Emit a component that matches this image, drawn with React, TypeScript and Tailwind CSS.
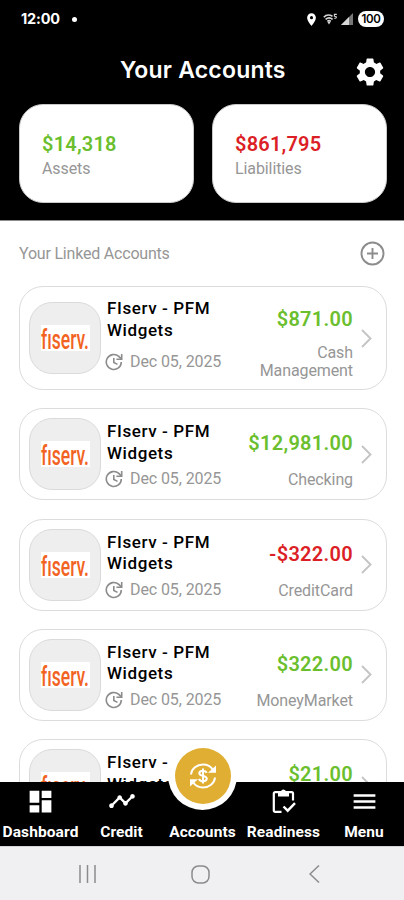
import type { ReactNode } from "react"
import { MdSettings, MdDashboard, MdTimeline, MdMenu, MdLocationOn } from "react-icons/md"

type Account = {
  name: string;
  date: string;
  amount: string;
  type: string;
}

const accounts: Account[] = [
  { name: "FIserv - PFM Widgets", date: "Dec 05, 2025", amount: "$871.00", type: "Cash Management" },
  { name: "FIserv - PFM Widgets", date: "Dec 05, 2025", amount: "$12,981.00", type: "Checking" },
  { name: "FIserv - PFM Widgets", date: "Dec 05, 2025", amount: "-$322.00", type: "CreditCard" },
  { name: "FIserv - PFM Widgets", date: "Dec 05, 2025", amount: "$322.00", type: "MoneyMarket" },
  { name: "FIserv - PFM Widgets", date: "Dec 05, 2025", amount: "$21.00", type: "" },
]

function StatusBar() {
  return (
    <div className="flex h-[38px] items-center justify-between pl-[21px] pr-[20px] text-white">
      <div className="flex items-center gap-3">
        <span className="font-['Inter'] text-[14.5px] font-bold tracking-[-0.2px]">12:00</span>
        <span className="size-[5px] rounded-full bg-white" />
      </div>
      <div className="flex items-center">
        <MdLocationOn className="size-[15px]" />
        <svg className="ml-[4px]" width="15" height="12" viewBox="0 0 15 12" fill="none" stroke="#d5d5d5" strokeWidth="1.6">
          <path d="M.8 4.200C3.200 1.600 6.500 1.600 9.500 3.200M2.600 6.400c2.200-2 4.800-2 7 0M4.400 8.300c1.200-.9 2.200-.9 3.400 0" />
          <path d="M6 11.500 4.300 8.800h3.400z" fill="#d5d5d5" stroke="none" />
          <path d="M13.800 1.400h-2.400v1.800c2.600-.3 2.600 2.400 0 2.200" strokeWidth="1.100" />
        </svg>
        <svg className="ml-[3px]" width="12" height="12" viewBox="0 0 12 12">
          <path d="M0 12 12 0v12z" fill="#777" />
          <path d="M0 12 8 4v8z" fill="#d8d8d8" />
        </svg>
        <span className="ml-[5px] flex h-[16px] w-[26px] items-center justify-center rounded-full bg-white font-['Inter'] text-[11.500px] font-semibold leading-4 tracking-[-0.3px] text-black">
          100
        </span>
      </div>
    </div>
  )
}

function SummaryCard({ amount, label, color }: { amount: string; label: string; color: string }) {
  return (
    <div className="h-[99px] w-[175px] rounded-[24px] border border-[#c9c9c9] bg-white pl-[22px] pt-[27px]">
      <p className={`text-[20px] font-semibold leading-6 tracking-[0.2px] ${color}`}>{amount}</p>
      <p className="mt-px text-[16px] leading-6 tracking-[-0.1px] text-[#969696]">{label}</p>
    </div>
  )
}

function Logo() {
  return (
    <div className="flex size-[72px] shrink-0 items-center justify-center rounded-[23px] border border-[#dadada] bg-[#eeeeee]">
      <svg width="70" height="70" viewBox="0 0 70 70">
        <rect x="11" y="22" width="49" height="26" fill="#fff" />
        <text x="11" y="46" textLength="48" lengthAdjust="spacingAndGlyphs" fill="#f26322" fontFamily="Roboto, sans-serif" fontSize="28" fontWeight="500">
          fıserv.
        </text>
      </svg>
    </div>
  )
}

function UpdateIcon() {
  return (
    <svg className="-ml-[2px] shrink-0" width="18" height="18" viewBox="0 0 18 18" fill="none" stroke="#8c8c8c" strokeWidth="1.600">
      <path d="M16.300 9A7.500 7.500 0 1 1 13.800 3.400L16 5.600" />
      <path d="M16.700 1v5.300h-5.300" />
      <path d="M8.800 5v4.500l3.700 1.900" />
    </svg>
  )
}

function AccountCard({ account }: { account: Account }) {
  const negative = account.amount.startsWith("-")
  const tall = account.type.includes(" ")

  return (
    <div className={`flex shrink-0 items-center rounded-[24px] border-[1.5px] border-[#dcdcdc] bg-white pl-[9px] ${tall ? "h-[104px]" : "h-[92px]"}`}>
      <Logo />
      <div className={`ml-[6px] flex w-[124px] shrink-0 flex-col self-stretch ${tall ? "justify-between pb-[17px] pt-[11px]" : "pt-[12px]"}`}>
        <p className="w-[112px] text-[17px] font-medium leading-[21.500px] tracking-[0.6px] text-black">{account.name}</p>
        <div className="mt-[5px] flex items-center gap-[7px]">
          <UpdateIcon />
          <span className="whitespace-nowrap text-[16px] leading-5 tracking-[-0.1px] text-[#969696]">{account.date}</span>
        </div>
      </div>
      <div className={`flex flex-1 flex-col self-stretch text-right ${tall ? "pt-[20px]" : "pt-[22px]"}`}>
        <p className={`-ml-4 text-[20px] font-semibold leading-6 tracking-[0.3px] ${negative ? "text-[#dc1f26]" : "text-[#6bbf2e]"}`}>
          {account.amount}
        </p>
        <p className={`text-[16px] leading-[18px] tracking-[-0.1px] text-[#969696] ${tall ? "mt-[13px]" : "mt-[16px]"}`}>{account.type}</p>
      </div>
      <svg className="ml-[8px] mr-[14px] shrink-0" width="11" height="19" viewBox="0 0 11 19" fill="none" stroke="#c4c4c4" strokeWidth="1.900">
        <path d="m1 1 8.500 8.500L1 18" />
      </svg>
    </div>
  )
}

function NavItem({ label, width, children }: { label: string; width: string; children?: ReactNode }) {
  return (
    <div className={`flex shrink-0 flex-col items-center ${width}`}>
      <div className="flex h-[38px] items-center justify-center">{children}</div>
      <span className="whitespace-nowrap text-[15.500px] font-bold leading-6 tracking-[0.100px]">{label}</span>
    </div>
  )
}

export default function App() {
  return (
    <div className="flex h-[900px] w-[404px] flex-col overflow-hidden bg-white font-['Roboto',sans-serif]">
      <header className="h-[221px] shrink-0 border-b border-[#8a8a8a] bg-black">
        <StatusBar />
        <div className="flex h-[66px] items-center pl-[120px] pr-[17px] text-white">
          <h1 className="flex-1 whitespace-nowrap pb-[2px] font-['Inter'] text-[23px] font-semibold tracking-[0.200px]">Your Accounts</h1>
          <MdSettings className="mt-[2px] size-[34px]" />
        </div>
        <div className="flex justify-between pl-[19px] pr-[17px]">
          <SummaryCard amount="$14,318" label="Assets" color="text-[#6bbf2e]" />
          <SummaryCard amount="$861,795" label="Liabilities" color="text-[#dc1f26]" />
        </div>
      </header>

      <main className="flex min-h-0 flex-1 flex-col overflow-hidden pl-[19px] pr-[17px]">
        <div className="flex h-[65px] shrink-0 items-center justify-between">
          <h2 className="pt-px text-[16px] tracking-[-0.200px] text-[#969696]">Your Linked Accounts</h2>
          <svg className="mr-[2px]" width="25" height="25" viewBox="0 0 25 25" fill="none" stroke="#8c8c8c" strokeWidth="1.900">
            <circle cx="12.500" cy="12.500" r="11" />
            <path d="M12.500 7v11M7 12.500h11" />
          </svg>
        </div>
        <div className="flex flex-col gap-[18.300px]">
          {accounts.map((account, i) => (
            <AccountCard key={i} account={account} />
          ))}
        </div>
      </main>

      <nav className="relative flex h-[64px] shrink-0 bg-black text-white">
        <NavItem label="Dashboard" width="w-[81px]">
          <MdDashboard className="size-[29px]" />
        </NavItem>
        <NavItem label="Credit" width="w-[81px]">
          <MdTimeline className="size-[28px]" />
        </NavItem>
        <NavItem label="Accounts" width="w-[81px]" />
        <NavItem label="Readiness" width="w-[81px]">
          <svg width="24" height="25" viewBox="0 0 24 25" fill="none" stroke="#fff" strokeWidth="2.200">
            <path d="M9.500 22.900H3.200a1.400 1.400 0 0 1-1.400-1.400V4.600a1.400 1.400 0 0 1 1.400-1.400h16.400A1.400 1.400 0 0 1 21 4.600v6.800" />
            <path d="m11.500 17.500 4.200 4.200 7.300-7.600" strokeWidth="2.400" />
            <path d="M6 3h3a2.500 2.500 0 0 1 5 0h3v4.500H6z" fill="#fff" stroke="none" />
          </svg>
        </NavItem>
        <NavItem label="Menu" width="w-[80px]">
          <MdMenu className="size-[29px]" />
        </NavItem>

        <div className="absolute left-[168px] top-[-41px] flex size-[69px] items-center justify-center rounded-full bg-white">
          <div className="flex size-[56px] items-center justify-center rounded-full bg-[#dfae33]">
            <svg width="28" height="26" viewBox="0 0 28 26" fill="none" stroke="#fff" strokeWidth="2">
              <path d="M2 11.500C2.500 5.500 8 1.500 14 1.500c4.500 0 8 2.200 10 5.500" />
              <path d="M26 14.500C25.500 20.500 20 24.500 14 24.500c-4.500 0-8-2.200-10-5.500" />
              <path d="M27 2.500v7.300h-8zM1 23.500v-7.300h8z" fill="#fff" stroke="none" />
              <path d="M17.800 9.800C17 8.200 15.700 7.700 14 7.700c-2.200 0-3.700 1-3.700 2.600 0 3.700 7.500 1.600 7.500 5.300 0 1.700-1.600 2.700-3.800 2.700-1.900 0-3.400-.8-4-2.500M14 5.500v15" />
            </svg>
          </div>
        </div>
      </nav>

      <div className="flex h-[54px] shrink-0 items-center border-t border-[#d5d5d7] bg-[#f0f0f3] pl-[79px] pt-px">
        <svg width="17" height="18" viewBox="0 0 17 18" stroke="#8b8b8d" strokeWidth="1.500">
          <path d="M1 0v18M8.500 0v18M16 0v18" />
        </svg>
        <svg className="ml-[95px]" width="19" height="19" viewBox="0 0 19 19" fill="none" stroke="#8b8b8d" strokeWidth="1.500">
          <rect x="1" y="1" width="17" height="17" rx="6.500" />
        </svg>
        <svg className="ml-[99px]" width="11" height="18" viewBox="0 0 11 18" fill="none" stroke="#8b8b8d" strokeWidth="1.500">
          <path d="M10 .5 1 9l9 8.500" />
        </svg>
      </div>
    </div>
  )
}
